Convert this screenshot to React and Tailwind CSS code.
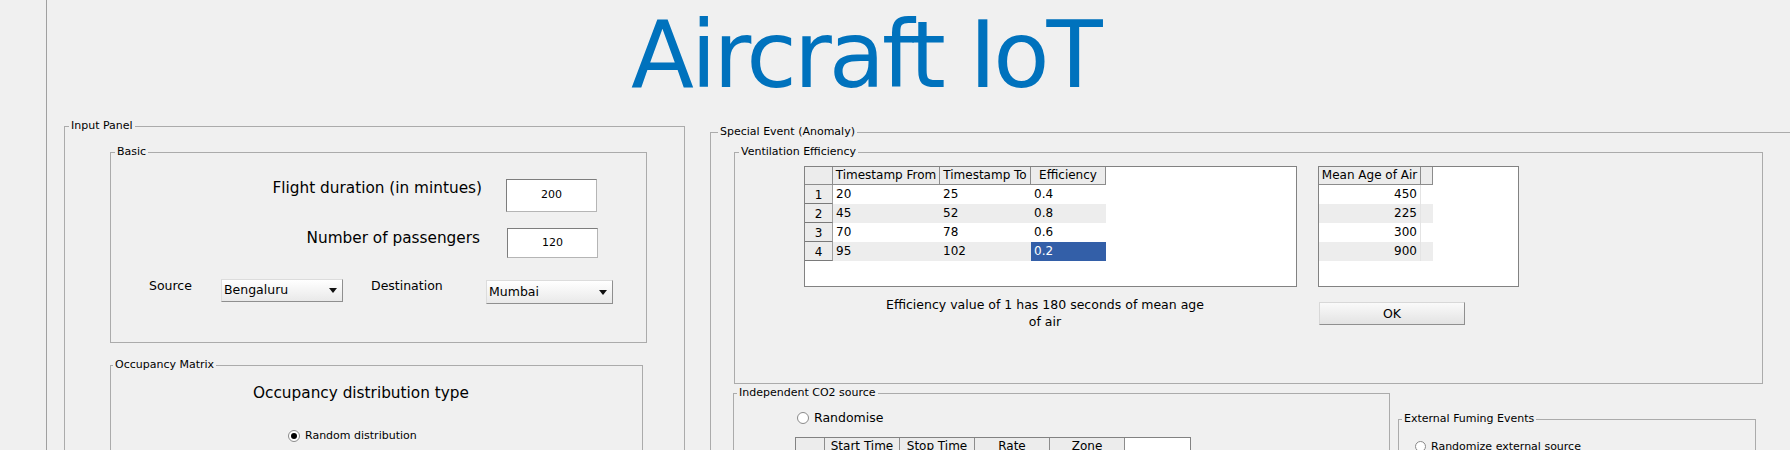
import clsx from 'clsx';

const Group = ({ label, labelLeft = 'left-[4px]', className, children }) => (
  <div className={clsx('relative shrink-0 border border-[#ababab]', className)}>
    <span className={clsx('absolute -top-[8px] bg-[#f0f0f0] px-[2px] text-[11px] leading-[14px] whitespace-nowrap', labelLeft)}>
      {label}
    </span>
    {children}
  </div>
);

const Radio = ({ checked, size = 'w-[12px] h-[12px]' }) => (
  <span className={clsx('flex shrink-0 items-center justify-center rounded-full border border-[#8a8a8a] bg-white', size)}>
    {checked && <span className="h-[6px] w-[6px] rounded-full bg-black" />}
  </span>
);

const EditBox = ({ value, className }) => (
  <div className={clsx('flex shrink-0 items-center justify-center border border-[#b5b5b5] border-l-[#7d7d7d] border-t-[#7d7d7d] bg-white text-[11px]', className)}>
    {value}
  </div>
);

const Dropdown = ({ value, className }) => (
  <div className={clsx('flex shrink-0 items-center justify-between border border-[#dcdcdc] border-b-[#8f8f8f] border-r-[#8f8f8f] bg-gradient-to-b from-[#ffffff] to-[#e9e9e9] pl-[2px] pr-[5px] text-[12.5px]', className)}>
    <span>{value}</span>
    <svg width="8" height="5" viewBox="0 0 8 5"><path d="M0 0h8L4 5z" fill="#111" /></svg>
  </div>
);

const headCell = 'shrink-0 overflow-hidden whitespace-nowrap border-b border-r border-[#8c8c8c] bg-[#ececec] text-center';

const ventRows = [
  ['20', '25', '0.4'],
  ['45', '52', '0.8'],
  ['70', '78', '0.6'],
  ['95', '102', '0.2'],
];
const ageRows = ['450', '225', '300', '900'];

const VentTable = () => (
  <div className="h-[121px] w-[493px] overflow-hidden border border-[#828282] bg-white text-[12px]">
    <div className="flex h-[18px] leading-[17px]">
      <div className={clsx(headCell, 'w-[28px]')} />
      <div className={clsx(headCell, 'w-[107px]')}>Timestamp From</div>
      <div className={clsx(headCell, 'w-[91px]')}>Timestamp To</div>
      <div className={clsx(headCell, 'w-[75px]')}>Efficiency</div>
    </div>
    {ventRows.map((r, i) => (
      <div key={i} className="flex h-[19px] leading-[19px]">
        <div className="w-[28px] shrink-0 border-b border-r border-[#a0a0a0] border-b-[#7a7a7a] bg-[#ececec] pt-[1px] text-center leading-[18px]">{i + 1}</div>
        <div className={clsx('w-[107px] shrink-0 pl-[3px]', i % 2 ? 'bg-[#ededed]' : 'bg-white')}>{r[0]}</div>
        <div className={clsx('w-[91px] shrink-0 pl-[3px]', i % 2 ? 'bg-[#ededed]' : 'bg-white')}>{r[1]}</div>
        <div className={clsx('w-[75px] shrink-0 pl-[3px]', i === 3 ? 'bg-[#335fa8] text-white' : i % 2 ? 'bg-[#ededed]' : 'bg-white')}>{r[2]}</div>
      </div>
    ))}
  </div>
);

const AgeTable = () => (
  <div className="h-[121px] w-[201px] overflow-hidden border border-[#828282] bg-white text-[12px]">
    <div className="flex h-[18px] leading-[17px]">
      <div className={clsx(headCell, 'w-[102px]')}>Mean Age of Air</div>
      <div className={clsx(headCell, 'w-[12px]')} />
    </div>
    {ageRows.map((v, i) => (
      <div key={i} className={clsx('flex h-[19px] w-[114px] leading-[19px]', i % 2 ? 'bg-[#ededed]' : 'bg-white')}>
        <div className="w-[102px] shrink-0 border-r border-[#e4e4e4] pr-[3px] text-right">{v}</div>
      </div>
    ))}
  </div>
);

const Co2Table = () => (
  <div className="h-[40px] w-[396px] overflow-hidden border border-[#828282] bg-white text-[12px]">
    <div className="flex h-[18px] leading-[17px]">
      <div className={clsx(headCell, 'w-[29px]')} />
      <div className={clsx(headCell, 'w-[75px]')}>Start Time</div>
      <div className={clsx(headCell, 'w-[75px]')}>Stop Time</div>
      <div className={clsx(headCell, 'w-[75px]')}>Rate</div>
      <div className={clsx(headCell, 'w-[75px]')}>Zone</div>
    </div>
  </div>
);

export default function App() {
  return (
    <div className="flex h-[450px] w-[1790px] overflow-hidden bg-[#f0f0f0] font-['DejaVu_Sans',sans-serif] text-black">
      <div className="w-[46px] shrink-0" />
      <div className="min-w-0 flex-1 border-l border-[#a0a0a0]">
        {/* version text, mostly scrolled off the top */}
        <div className="ml-[8px] h-[4px] overflow-hidden">
          <div className="-mt-[10px] text-[11px] leading-[14px]">v1.0</div>
        </div>

        <h1 className="h-[100px] pl-[584px] pt-[2px] text-[92px] leading-[100px] tracking-[-3px] whitespace-nowrap text-[#0072bd]">
          Aircraft IoT
        </h1>

        <div className="flex items-start">
          {/* Input panel */}
          <Group label="Input Panel" className="ml-[17px] mt-[22px] h-[400px] w-[621px]">
            <Group label="Basic" className="ml-[45px] mt-[25px] h-[191px] w-[537px]">
              <div className="mt-[26px] flex items-start">
                <span className="w-[371px] shrink-0 text-right text-[15.3px] leading-[18px]">Flight duration (in mintues)</span>
                <EditBox value="200" className="ml-[24px] h-[33px] w-[91px]" />
              </div>
              <div className="mt-[16px] flex items-start">
                <span className="mt-[1px] w-[369px] shrink-0 text-right text-[15.3px] leading-[18px]">Number of passengers</span>
                <EditBox value="120" className="ml-[27px] h-[30px] w-[91px]" />
              </div>
              <div className="mt-[21px] ml-[38px] flex items-start text-[12.5px]">
                <span className="-mt-[1px] w-[72px] shrink-0 leading-[15px]">Source</span>
                <Dropdown value="Bengaluru" className="h-[23px] w-[122px]" />
                <span className="-mt-[1px] ml-[28px] w-[115px] shrink-0 leading-[15px]">Destination</span>
                <Dropdown value="Mumbai" className="mt-[1px] h-[24px] w-[127px]" />
              </div>
            </Group>

            <Group label="Occupancy Matrix" labelLeft="left-[2px]" className="ml-[45px] mt-[22px] h-[200px] w-[533px]">
              <div className="ml-[142px] mt-[18px] text-[15.3px] leading-[18px]">Occupancy distribution type</div>
              <div className="ml-[177px] mt-[27px] flex items-center gap-[5px] text-[11px] leading-[13px]">
                <Radio checked />
                <span>Random distribution</span>
              </div>
            </Group>
          </Group>

          {/* Special event */}
          <Group label="Special Event (Anomaly)" labelLeft="left-[7px]" className="ml-[25px] mt-[28px] h-[400px] w-[1090px]">
            <Group label="Ventilation Efficiency" className="ml-[23px] mt-[19px] h-[232px] w-[1029px]">
              <div className="ml-[69px] mt-[13px] flex items-start">
                <div className="w-[493px] shrink-0">
                  <VentTable />
                  <p className="mt-[9px] pr-[11px] text-center text-[12.5px] leading-[17px]">
                    Efficiency value of 1 has 180 seconds of mean age
                    <br />
                    of air
                  </p>
                </div>
                <div className="ml-[21px] shrink-0">
                  <AgeTable />
                  <button className="ml-[1px] mt-[15px] h-[23px] w-[146px] border border-[#d8d8d8] border-b-[#8f8f8f] border-r-[#8f8f8f] bg-gradient-to-b from-[#fafafa] to-[#e3e3e3] text-[12.5px] leading-[20px]">
                    OK
                  </button>
                </div>
              </div>
            </Group>

            <div className="ml-[22px] mt-[9px] flex items-start">
              <Group label="Independent CO2 source" labelLeft="left-[3px]" className="h-[100px] w-[657px]">
                <div className="ml-[63px] mt-[17px] flex items-center gap-[5px] text-[12.5px] leading-[14px]">
                  <Radio />
                  <span>Randomise</span>
                </div>
                <div className="ml-[61px] mt-[12px]">
                  <Co2Table />
                </div>
              </Group>

              <Group label="External Fuming Events" labelLeft="left-[3px]" className="ml-[8px] mt-[26px] h-[80px] w-[358px]">
                <div className="ml-[16px] mt-[20px] flex items-center gap-[5px] text-[11px] leading-[13px]">
                  <Radio size="w-[11px] h-[11px]" />
                  <span>Randomize external source</span>
                </div>
              </Group>
            </div>
          </Group>
        </div>
      </div>
    </div>
  );
}
